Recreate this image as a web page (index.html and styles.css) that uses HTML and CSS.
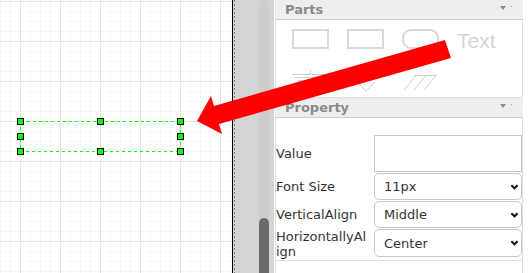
FILE: index.html
```html
<!DOCTYPE html>
<html>
<head>
<meta charset="utf-8">
<link rel="stylesheet" href="styles.css">
</head>
<body>
<div class="app">
  <div class="canvas">
    <svg class="selection" width="232" height="273" viewBox="0 0 232 273">
      <rect class="sel-border" x="20.5" y="121.5" width="160" height="30"/>
      <rect class="handle" x="17.5" y="118.5" width="6" height="6"/>
      <rect class="handle" x="97.5" y="118.5" width="6" height="6"/>
      <rect class="handle" x="177.5" y="118.5" width="6" height="6"/>
      <rect class="handle" x="17.5" y="133.5" width="6" height="6"/>
      <rect class="handle" x="177.5" y="133.5" width="6" height="6"/>
      <rect class="handle" x="17.5" y="148.5" width="6" height="6"/>
      <rect class="handle" x="97.5" y="148.5" width="6" height="6"/>
      <rect class="handle" x="177.5" y="148.5" width="6" height="6"/>
    </svg>
  </div>
  <div class="splitter">
    <div class="split-line"></div>
    <div class="track"><div class="thumb"></div></div>
  </div>
  <div class="panel">
    <section class="section">
      <div class="section-head">
        <span class="title">Parts</span>
        <span class="toggle"></span>
        <span class="dot"></span>
      </div>
      <div class="parts-body">
        <svg class="part" width="37" height="20" viewBox="0 0 37 20"><rect x="1" y="1" width="35" height="18"/></svg>
        <svg class="part" width="37" height="20" viewBox="0 0 37 20"><rect x="1" y="1" width="35" height="18"/></svg>
        <svg class="part" width="37" height="20" viewBox="0 0 37 20"><rect x="1" y="1" width="35" height="18" rx="8" ry="8"/></svg>
        <span class="part-text">Text</span>
        <svg class="part thin" width="37" height="24" viewBox="0 0 37 24">
          <line x1="18.5" y1="2" x2="18.5" y2="6.5"/>
          <line x1="0" y1="6.5" x2="37" y2="6.5"/>
          <line x1="3" y1="9.5" x2="34" y2="9.5"/>
          <line x1="6" y1="12.5" x2="31" y2="12.5"/>
          <line x1="9" y1="15.5" x2="28" y2="15.5"/>
        </svg>
        <svg class="part thin" width="37" height="24" viewBox="0 0 37 24">
          <polyline points="10,14 19,23 28,14"/>
        </svg>
        <svg class="part thin" width="37" height="24" viewBox="0 0 37 24">
          <line x1="12" y1="7.5" x2="35" y2="7.5"/>
          <line x1="14" y1="7.5" x2="2" y2="22"/>
          <line x1="24" y1="7.5" x2="12" y2="22"/>
          <line x1="34" y1="7.5" x2="22" y2="22"/>
        </svg>
      </div>
    </section>
    <section class="section">
      <div class="section-head">
        <span class="title">Property</span>
        <span class="toggle"></span>
        <span class="dot"></span>
      </div>
      <div class="props-body">
        <div class="prop-table">
          <label class="prop-label">Value</label>
          <textarea class="prop-text"></textarea>

          <label class="prop-label">Font Size</label>
          <div class="select-wrap">
            <select class="prop-select"><option>11px</option></select>
            <svg class="chev" width="9" height="6" viewBox="0 0 9 6"><polyline points="1.4,1.2 4.5,4.3 7.6,1.2"/></svg>
          </div>

          <label class="prop-label">VerticalAlign</label>
          <div class="select-wrap">
            <select class="prop-select"><option>Middle</option></select>
            <svg class="chev" width="9" height="6" viewBox="0 0 9 6"><polyline points="1.4,1.2 4.5,4.3 7.6,1.2"/></svg>
          </div>

          <label class="prop-label tall">HorizontallyAlign</label>
          <div class="select-wrap">
            <select class="prop-select last"><option>Center</option></select>
            <svg class="chev" width="9" height="6" viewBox="0 0 9 6"><polyline points="1.4,1.2 4.5,4.3 7.6,1.2"/></svg>
          </div>
        </div>
      </div>
    </section>
  </div>
</div>
<svg class="arrow" width="532" height="273" viewBox="0 0 532 273">
  <polygon points="197,121 211,96 214,106 445,40 451,58 219,124 222,134"/>
</svg>
</body>
</html>
```

FILE: styles.css
```css
html, body {
  margin: 0;
  padding: 0;
}

body {
  width: 532px;
  height: 273px;
  overflow: hidden;
  position: relative;
  background: #ffffff;
  font-family: "DejaVu Sans", Verdana, sans-serif;
}

.app {
  display: flex;
  height: 273px;
}

.canvas {
  position: relative;
  width: 232px;
  flex: none;
  border-right: 1px solid #000000;
  background-color: #ffffff;
  background-image:
    linear-gradient(to right, #e6e6e6 1px, transparent 1px),
    linear-gradient(to bottom, #e6e6e6 1px, transparent 1px),
    linear-gradient(to right, #f6f6f6 1px, transparent 1px),
    linear-gradient(to bottom, #f6f6f6 1px, transparent 1px);
  background-size: 40px 40px, 40px 40px, 10px 10px, 10px 10px;
  background-position: 20px 0, 0 1px, 0 0, 0 1px;
}

.selection {
  position: absolute;
  left: 0;
  top: 0;
}

.sel-border {
  fill: none;
  stroke: #00ff00;
  stroke-width: 1;
  stroke-dasharray: 3 3;
  shape-rendering: crispEdges;
}

.handle {
  fill: #00ff00;
  stroke: #000000;
  stroke-width: 1;
  shape-rendering: crispEdges;
}

.splitter {
  display: flex;
  width: 41px;
  flex: none;
  background: #d4d4d4;
}

.split-line {
  width: 1px;
  margin-left: 1px;
  background-image: repeating-linear-gradient(to bottom, #7a7a7a 0, #7a7a7a 2px, transparent 2px, transparent 4px);
}

.track {
  display: flex;
  flex-direction: column;
  width: 10px;
  margin-left: 24px;
  background: #cdcdcd;
  border-radius: 5px 5px 0 0;
}

.thumb {
  margin-top: 218px;
  flex: 1;
  background: #6a6a6a;
  border-radius: 5px 5px 0 0;
}

.panel {
  flex: 1;
  background: #ffffff;
  padding-left: 1px;
}

.section {
  width: 248px;
}

.section-head {
  display: flex;
  align-items: center;
  height: 19px;
  padding-left: 10px;
  background: #eeeeee;
  border-bottom: 1px solid #cfcfcf;
}

.title {
  font-size: 13px;
  font-weight: bold;
  color: #8a8a8a;
  line-height: 19px;
}

.toggle {
  margin-left: auto;
  width: 0;
  height: 0;
  border-left: 3.5px solid transparent;
  border-right: 3.5px solid transparent;
  border-top: 4px solid #8c8c8c;
  margin-top: -3px;
}

.dot {
  width: 1px;
  height: 1px;
  background: #9a9a9a;
  margin-left: 5px;
  margin-right: 11px;
  margin-top: -6px;
}

.parts-body {
  display: grid;
  grid-template-columns: repeat(4, 37px);
  column-gap: 18px;
  row-gap: 10px;
  align-items: start;
  height: 68px;
  padding: 9px 0 0 16px;
  border-left: 1px solid #dddddd;
  border-right: 1px solid #dddddd;
  border-bottom: 1px solid #dddddd;
}

.part rect {
  fill: none;
  stroke: #d9d9d9;
  stroke-width: 2;
}

.part.thin line,
.part.thin polyline {
  fill: none;
  stroke: #cfcfcf;
  stroke-width: 1;
}

.part-text {
  font-family: "Liberation Sans", Arial, sans-serif;
  font-size: 21px;
  line-height: 24px;
  color: #d4d4d4;
  white-space: nowrap;
}

.props-body {
  height: 138px;
  padding-top: 17px;
  border-left: 1px solid #dddddd;
  border-right: 1px solid #dddddd;
}

.prop-table {
  display: grid;
  grid-template-columns: 98px 148px;
  row-gap: 1px;
  padding-bottom: 1px;
  border-bottom: 1px solid #e2e2e2;
}

.prop-label {
  align-self: center;
  padding-right: 6px;
  font-size: 13px;
  line-height: 15px;
  color: #333333;
  word-break: break-all;
}

.prop-text {
  display: block;
  box-sizing: border-box;
  width: 148px;
  height: 37px;
  margin: 0;
  padding: 0;
  border: 1px solid #c8c8c8;
  border-radius: 0;
  resize: none;
  outline: none;
  background: #ffffff;
}

.select-wrap {
  position: relative;
  align-self: start;
}

.prop-select {
  display: block;
  box-sizing: border-box;
  width: 148px;
  height: 27px;
  margin: 0;
  padding: 0 0 0 9px;
  border: 1px solid #c8c8c8;
  border-radius: 5px;
  background: #ffffff;
  font-family: "DejaVu Sans", Verdana, sans-serif;
  font-size: 13px;
  color: #333333;
  -webkit-appearance: none;
  appearance: none;
  outline: none;
}

.prop-select.last {
  height: 28px;
}

.chev {
  position: absolute;
  right: 3px;
  top: 50%;
  margin-top: -3px;
}

.chev polyline {
  fill: none;
  stroke: #111111;
  stroke-width: 2;
}

.arrow {
  position: absolute;
  left: 0;
  top: 0;
  pointer-events: none;
}

.arrow polygon {
  fill: #ff0000;
}
```
